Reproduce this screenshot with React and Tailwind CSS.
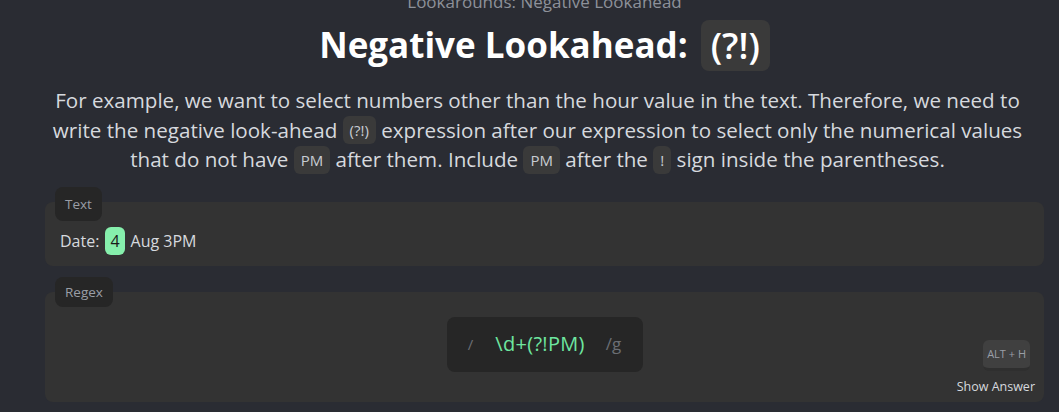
export default function App() {
  const code = "inline-block rounded-md bg-[#3a3a3a] px-[7px] text-[15px] leading-[28px] text-[#c8ccd2] align-middle -mt-[3px]";
  return (
    <div className="w-[1059px] h-[412px] overflow-hidden bg-[#2a2c33] pl-[45px] pr-[15px]" style={{ fontFamily: '"Open Sans", sans-serif' }}>
      <div className="flex flex-col items-center -mt-[10px]">
        <div className="text-[17px] leading-[24px] text-[#8d919a]">Lookarounds: Negative Lookahead</div>
        <h1 className="mt-[5px] flex items-center text-[35px] font-bold leading-[52px] text-white">
          <span>Negative Lookahead:</span>
          <span className="ml-[13px] rounded-lg bg-[#3a3a3a] px-[10px] text-[36px] font-semibold leading-[51px]">(?!)</span>
        </h1>
        <p className="mt-[15px] w-[985px] self-start text-center text-[20.6px] leading-[29.5px] text-[#d6d9de]">
          For example, we want to select numbers other than the hour value in the text. Therefore, we need to write the negative look-ahead <span className={code}>(?!)</span> expression after our expression to select only the numerical values that do not have <span className={code}>PM</span> after them. Include <span className={code}>PM</span> after the <span className={code}>!</span> sign inside the parentheses.
        </p>
      </div>

      <div className="relative mt-[27px]">
        <div className="absolute z-10 left-[10px] top-[-15px] rounded-lg bg-[#262626] px-[10px] text-[13.5px] leading-[34px] text-[#9a9ea6]">Text</div>
        <div className="h-[64px] rounded-lg bg-[#333333] px-[15px] pt-[25px] flex items-start text-[16px] text-[#d6d9de]">
          <span className="leading-[28px]">Date:</span>
          <span className="ml-[6px] rounded-md bg-[#86efac] px-[5px] leading-[28px] text-[#1a1a1a]">4</span>
          <span className="ml-[6px] leading-[28px]">Aug 3PM</span>
        </div>
      </div>

      <div className="relative mt-[26px]">
        <div className="absolute z-10 left-[10px] top-[-15px] rounded-lg bg-[#262626] px-[10px] text-[13.5px] leading-[30px] text-[#9a9ea6]">Regex</div>
        <div className="relative h-[110px] rounded-lg bg-[#333333] flex justify-center pt-[25px]">
          <div className="flex h-[55px] w-[196px] items-center justify-center rounded-lg bg-[#262626] text-[20px]">
            <span className="text-[15px] text-[#6b6e74]">/</span>
            <span className="ml-[22px] tracking-[0.3px] text-[#6ee7a0]">\d+(?!PM)</span>
            <span className="ml-[21px] text-[17px] text-[#6b6e74]">/g</span>
          </div>
          <div className="absolute right-[9px] top-[48px] flex flex-col items-end">
            <div className="mr-[5px] rounded-md border-b-[3px] border-[#2f2f2f] bg-[#404040] px-[4px] text-[11px] leading-[28px] text-[#9a9ea6]">ALT + H</div>
            <div className="mt-[7px] text-[12.5px] leading-[18px] text-[#d6d9de]">Show Answer</div>
          </div>
        </div>
      </div>
    </div>
  );
}
